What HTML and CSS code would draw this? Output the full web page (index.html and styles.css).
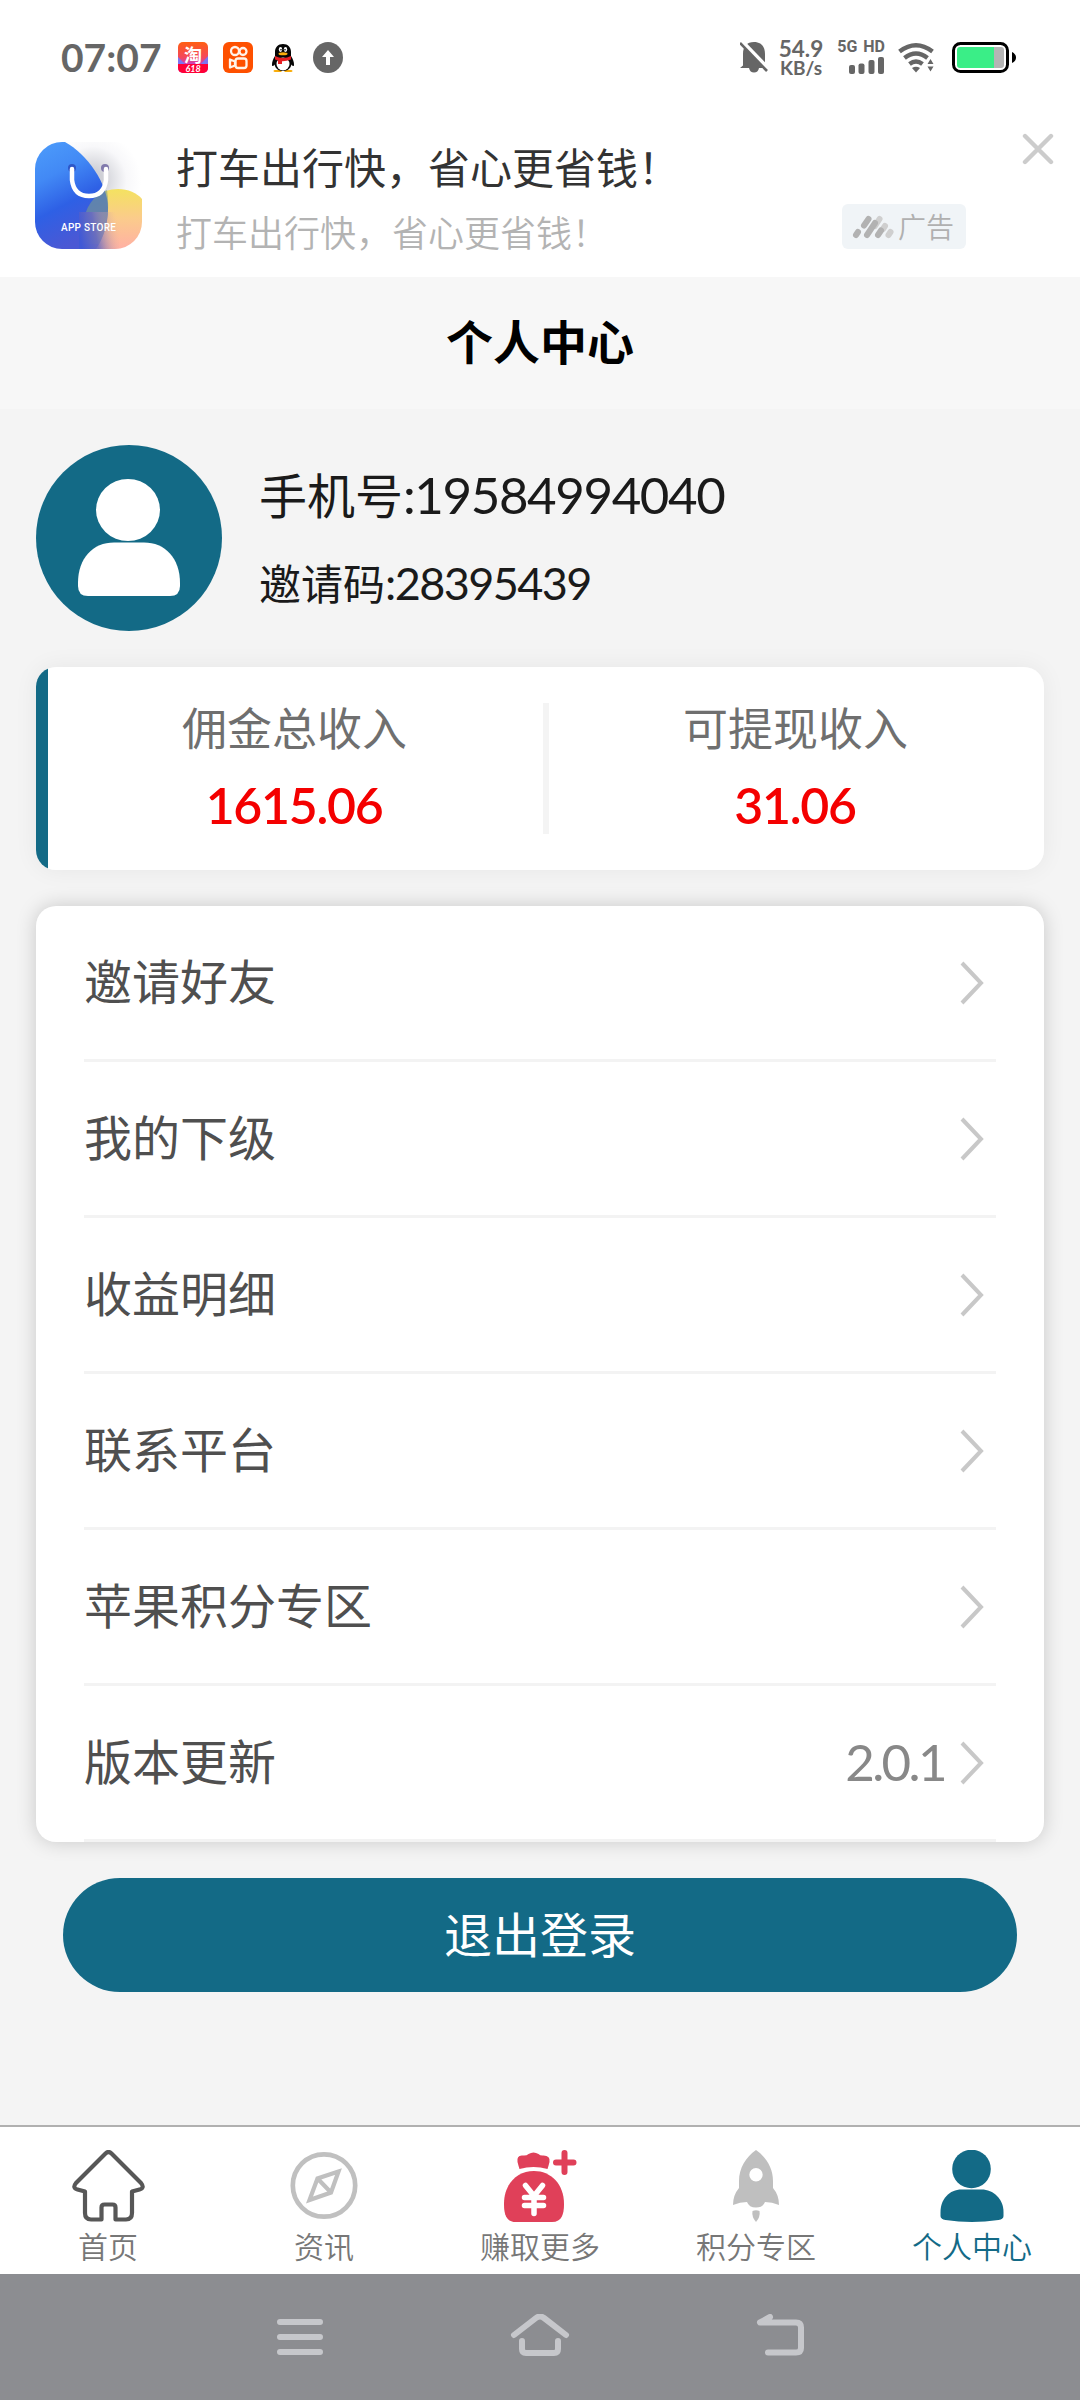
FILE: index.html
```html
<!DOCTYPE html>
<html lang="zh-CN">
<head>
<meta charset="utf-8">
<title>个人中心</title>
<link rel="stylesheet" href="styles.css">
</head>
<body>
<div class="screen">
  <header class="status">
    <span class="clock">07:07</span>
    <div class="apps">
      <svg width="30" height="31" viewBox="0 0 30 31">
        <defs><linearGradient id="tb" x1="0" y1="0" x2="0" y2="1"><stop offset="0" stop-color="#ff5f12"/><stop offset=".5" stop-color="#f4475c"/><stop offset=".75" stop-color="#c33fd0"/></linearGradient>
        <clipPath id="tbc"><rect width="30" height="31" rx="5"/></clipPath></defs>
        <g clip-path="url(#tbc)"><rect width="30" height="31" fill="url(#tb)"/><path d="M0 15l7 7H0zM30 14l-7 8h7z" fill="#7d74f0"/><rect y="22" width="30" height="9" fill="#ff0036"/>
        <text x="15" y="19.500" class="tao">淘</text><text x="15" y="30" class="sale">618</text></g>
      </svg>
      <svg width="30" height="31" viewBox="0 0 30 31">
        <rect width="30" height="31" rx="6" fill="#fe5000"/>
        <g fill="none" stroke="#fff3ea" stroke-width="2.300"><circle cx="12" cy="9" r="4"/><circle cx="20" cy="9.500" r="3.500"/><rect x="12.500" y="16.500" width="11" height="9.500" rx="2.500"/><path d="M12 19.500L7 17.500v8l5-2z" stroke-linejoin="round"/></g>
      </svg>
      <svg width="24" height="31" viewBox="0 0 24 31">
        <path d="M4 28c-2 0-2 2 0 2h6l2-2 2 2h6c2 0 2-2 0-2z" fill="#f9ad0b"/>
        <path d="M12 2c-5 0-8 3.500-8 8v4C2 17 1 20 1 22.500c0 2 1 2 2.500 0C4.500 27 8 29 12 29s7.500-2 8.500-6.500c1.500 2 2.500 2 2.500 0 0-2.500-1-5.500-3-8.500v-4c0-4.500-3-8-8-8z" fill="#060606"/>
        <ellipse cx="12" cy="22" rx="6.500" ry="6.500" fill="#fff"/><ellipse cx="9.500" cy="7.500" rx="1.700" ry="2.400" fill="#fff"/><ellipse cx="14.500" cy="7.500" rx="1.700" ry="2.400" fill="#fff"/><circle cx="10" cy="7.700" r=".8"/><circle cx="14" cy="7.700" r=".8"/>
        <ellipse cx="12" cy="11.700" rx="4.500" ry="1.500" fill="#f9ad0b"/><path d="M4 14q8 4 16 0v3.500q-5 2-9 1.800V22H7v-3.400l-3-1z" fill="#e61f23"/>
      </svg>
      <svg width="30" height="31" viewBox="0 0 30 31"><ellipse cx="15" cy="15.500" rx="15" ry="15.500" fill="#666"/><path d="M15 8l6 7h-4v8h-4v-8H9z" fill="#fff"/></svg>
    </div>
    <div class="signals">
      <svg width="28" height="32" viewBox="0 0 28 32"><path d="M3 24.500V13C3 5.500 7 1 14 1s11 4.500 11 12v11.500l2 2.500H0z" fill="#666"/><path d="M9 27h10q-1 4.500-5 4.500T9 27z" fill="#666"/><path d="M1 0l28 29" stroke="#fff" stroke-width="5"/><path d="M0 2l27 28" stroke="#666" stroke-width="2.600"/></svg>
      <div class="speed"><span>54.9</span><span>KB/s</span></div>
      <div class="cell"><span>5G HD</span><svg width="36" height="17" viewBox="0 0 36 17" fill="#666"><rect x="0" y="8" width="6" height="9" rx="2"/><rect x="9.500" y="6.500" width="6" height="10.500" rx="2"/><rect x="19.500" y="3" width="6" height="14" rx="2"/><rect x="29" y="0" width="6" height="17" rx="2"/></svg></div>
      <svg class="wifi" width="37" height="31" viewBox="0 0 37 31"><g fill="none" stroke="#666" stroke-width="4.400"><path d="M1.500 9.500Q18 -3 34.500 9.500"/><path d="M6.500 16Q18 7 29.500 16"/><path d="M11.500 22Q18 17 24.500 22"/></g><path d="M14 26q4-2.500 8 0l-4 4.500z" fill="#666"/><path d="M29.500 22l3-5 3 5zM29.500 24.500h6l-3 5z" fill="#666"/></svg>
      <svg class="battery" width="66" height="31" viewBox="0 0 66 31"><rect x="1.500" y="1.500" width="54" height="28" rx="7" fill="#fff" stroke="#000" stroke-width="3"/><path d="M8 5h34v21H8q-3 0-3-3V8q0-3 3-3z" fill="#3aee87"/><path d="M42 5h7q3 0 3 3v15q0 3-3 3h-7z" fill="#b5b5b5"/><path d="M60 10q4 2 4 5.500T60 21z"/></svg>
    </div>
  </header>

  <section class="ad">
    <svg class="ad-logo" width="107" height="107" viewBox="0 0 107 107">
      <defs>
        <linearGradient id="bg1" x1="0" y1="0" x2=".35" y2="1"><stop offset="0" stop-color="#4d9dfb"/><stop offset=".35" stop-color="#4289f5"/><stop offset=".65" stop-color="#2e60e5"/><stop offset="1" stop-color="#4b58d4"/></linearGradient>
        <linearGradient id="bg2" x1="0" y1="0" x2="0" y2="1"><stop offset="0" stop-color="#f4e260"/><stop offset=".5" stop-color="#fbcb8c"/><stop offset="1" stop-color="#ffb0a4"/></linearGradient>
        <linearGradient id="bg3" gradientUnits="userSpaceOnUse" x1="44" y1="92" x2="84" y2="84"><stop offset="0" stop-color="#4059d6"/><stop offset=".4" stop-color="#6a6cc0" stop-opacity=".9"/><stop offset="1" stop-color="#fbbf98" stop-opacity="0"/></linearGradient>
        <radialGradient id="bg4" gradientUnits="userSpaceOnUse" cx="58" cy="38" r="48"><stop offset=".2" stop-color="#cfd0d6"/><stop offset=".7" stop-color="#f8f8fa"/><stop offset="1" stop-color="#fff"/></radialGradient>
        <clipPath id="ac"><rect width="107" height="107" rx="27"/></clipPath>
      </defs>
      <g clip-path="url(#ac)"><rect width="107" height="107" fill="url(#bg4)"/>
      <path d="M83 47c10 0 19 4 24 10v50H48V78C50 58 66 47 83 47z" fill="url(#bg2)"/>
      <path d="M0 0h30C52 12 73 42 73 66c0 18-6 32-12 41H0z" fill="url(#bg1)"/>
      <path d="M48 82C50 66 58 53 72 48c3 20 0 40-8 54H48z" fill="#7c9c8c" opacity=".6"/>
      <path d="M44 70h40v37H44z" fill="url(#bg3)"/></g>
      <circle cx="37" cy="26" r="4" fill="#2d56c8"/><circle cx="70" cy="26" r="4" fill="#817aac"/>
      <path d="M37 27v11q2 16 17 16t17-16V27" fill="none" stroke="#fff" stroke-width="4.500" stroke-linecap="round"/>
      <text x="26" y="89" class="store" textLength="55">APP STORE</text>
    </svg>
    <div class="ad-copy"><p class="ad-title">打车出行快，省心更省钱！</p><p class="ad-sub">打车出行快，省心更省钱！</p></div>
    <div class="ad-tag">
      <svg width="42" height="24" viewBox="0 0 42 24" stroke-width="6" stroke-linecap="round"><g stroke="#cfcfcf"><path d="M23 11L27.500 4M31 14l2-3M36.500 20l2-3"/></g><g stroke="#b2b2b2"><path d="M4 20l2-3M12 10.500L16.500 4M15 20l8-12M26 20l3-4.500"/></g></svg>
      <span>广告</span>
    </div>
    <svg class="close" width="32" height="32" viewBox="0 0 32 32"><path d="M3 3l26 26M29 3L3 29" stroke="#ccc" stroke-width="4.400" stroke-linecap="round"/></svg>
  </section>

  <h1 class="title">个人中心</h1>

  <main class="content">
    <section class="profile">
      <svg width="186" height="186" viewBox="0 0 186 186"><circle cx="93" cy="93" r="93" fill="#136a86"/><ellipse cx="92" cy="65" rx="32" ry="31" fill="#fff"/><path d="M42 138v3q0 10 10 10h82q10 0 10-10v-3c0-25-15-40.500-36-40.500H78c-21 0-36 15.500-36 40.500z" fill="#fff"/></svg>
      <div class="ids"><p class="phone">手机号<span>:19584994040</span></p><p class="invite">邀请码<span>:28395439</span></p></div>
    </section>

    <section class="income">
      <div class="amount"><p>佣金总收入</p><strong>1615.06</strong></div>
      <i class="split"></i>
      <div class="amount"><p>可提现收入</p><strong>31.06</strong></div>
    </section>

    <ul class="menu">
      <li><span>邀请好友</span><svg class="chev" viewBox="0 0 24 44"><path d="M2 2l19 20L2 42"/></svg></li>
      <li><span>我的下级</span><svg class="chev" viewBox="0 0 24 44"><path d="M2 2l19 20L2 42"/></svg></li>
      <li><span>收益明细</span><svg class="chev" viewBox="0 0 24 44"><path d="M2 2l19 20L2 42"/></svg></li>
      <li><span>联系平台</span><svg class="chev" viewBox="0 0 24 44"><path d="M2 2l19 20L2 42"/></svg></li>
      <li><span>苹果积分专区</span><svg class="chev" viewBox="0 0 24 44"><path d="M2 2l19 20L2 42"/></svg></li>
      <li><span>版本更新</span><em>2.0.1</em><svg class="chev" viewBox="0 0 24 44"><path d="M2 2l19 20L2 42"/></svg></li>
    </ul>

    <button class="logout">退出登录</button>
  </main>

  <nav class="tabs">
    <a class="tab"><svg width="76" height="72" viewBox="0 0 76 72"><path d="M35.500 3.500Q38.500 .5 41.500 3.500L71 33q4 5-1.500 6.500L62 41.500V63q0 6.500-6 6.500H45.500V57.500q0-3-3-3h-8q-3 0-3 3v12H21q-6 0-6-6.500V41.500L7.500 39.500Q2 38 6 33z" fill="none" stroke="#575757" stroke-width="4.200" stroke-linejoin="round"/></svg><span>首页</span></a>
    <a class="tab"><svg width="72" height="72" viewBox="0 0 72 72" fill="none" stroke="#c0c0c0"><ellipse cx="36" cy="35.500" rx="31.200" ry="31.200" stroke-width="4.700"/><path d="M50.500 21.500L29.500 28.500 21.500 50 43 42.500zM29.500 28.500L43 42.500" stroke-width="4.200"/></svg><span>资讯</span></a>
    <a class="tab"><svg width="76" height="72" viewBox="0 0 76 72"><path d="M17.500 19q-1-3-2-7-1-7 5-6.500 4 .5 6-1.500 5-3 10 0 2 2 5 1.500 7 0 6 6.500-1 4-2 7-14-4-28 0z" fill="#e04059"/><path d="M14 72C4 72 2 64 2 54 2 34 15 21 32 21s30 13 30 33c0 10-2 18-12 18z" fill="#e04059"/><path d="M23.500 35.500L32 46l8.500-10.500M22.500 47.500h19M22.500 55.500h19M32 46v17.500" fill="none" stroke="#fff" stroke-width="5.500" stroke-linecap="round"/><path d="M62.500 3v19M54 12.500h17.500" stroke="#e04059" stroke-width="6" stroke-linecap="round"/></svg><span>赚取更多</span></a>
    <a class="tab"><svg width="48" height="72" viewBox="0 0 48 72" fill="#bfbfbf"><path fill-rule="evenodd" d="M24 0c10 7 17 18 17 31v7q6 7 6 17-7-3-14-3-2 5.500-9 5.500T15 52q-7 0-14 3 0-10 6-17v-7C7 18 14 7 24 0zM24 18a6.700 6.700 0 100 13.400A6.700 6.700 0 0024 18z"/><path d="M20.500 61q3.500-1.500 7 0 1 6-3.500 11-4.500-5-3.500-11z"/></svg><span>积分专区</span></a>
    <a class="tab active"><svg width="64" height="72" viewBox="0 0 64 72" fill="#136a86"><circle cx="31.500" cy="19" r="19.300"/><path d="M.5 62c0-13 9-22.500 21-22.500h20c12 0 22 9.500 22 22.500v4q0 3-5 4-27 4-53 0-5-1-5-4z"/></svg><span>个人中心</span></a>
  </nav>

  <footer class="sysnav">
    <svg width="48" height="46" viewBox="0 0 48 46"><path d="M4 8h40M4 23h40M4 38h40"/></svg>
    <svg width="60" height="46" viewBox="0 0 60 46"><path d="M4 21L26 4q4-3 8 0l22 17M12 27v8q0 4 4 4h28q4 0 4-4v-8"/></svg>
    <svg width="50" height="46" viewBox="0 0 50 46"><path d="M14 3L4 8.500h36q5 0 5 5V34q0 4.500-5 4.500H12"/></svg>
  </footer>
</div>
</body>
</html>
```
FILE: styles.css
```css
* { box-sizing: border-box; margin: 0; padding: 0; }
body { width: 1080px; font-family: Lato, "Noto Sans CJK SC", sans-serif; background: #f4f4f4; }
svg { display: block; flex: none; }
.screen { display: flex; flex-direction: column; width: 1080px; height: 2400px; overflow: hidden; }

.status { display: flex; align-items: center; height: 114px; background: #fff; padding: 0 62px 0 61px; color: #666; }
.clock { width: 117px; padding-bottom: 1px; font-size: 39px; line-height: 40px; font-weight: 700; white-space: nowrap; }
.apps { display: flex; align-items: center; gap: 15px; }
.apps svg:nth-child(3) { margin: 0 3px 0 3px; }
.tao { font: 700 18px "Noto Sans CJK SC", sans-serif; fill: #fff; text-anchor: middle; }
.sale { font: italic 700 9px Lato, sans-serif; fill: #fff; text-anchor: middle; }
.signals { display: flex; align-items: center; margin-left: auto; }
.speed { display: flex; flex-direction: column; align-items: center; width: 48px; margin: 1px 0 0 9px; font-size: 22.500px; line-height: 20px; font-weight: 700; }
.speed span:last-child { font-size: 19px; line-height: 18px; }
.cell { display: flex; flex-direction: column; align-items: flex-end; width: 48px; margin-left: 12px; gap: 3px; font: 700 16px/14px Roboto, sans-serif; word-spacing: 2px; white-space: nowrap; }
.wifi { margin-left: 13px; }
.battery { margin-left: 17px; }

.ad { display: flex; align-items: flex-start; height: 163px; background: #fff; padding: 28px 26px 0 35px; }
.ad-copy { width: 622px; margin: -2px 0 0 34px; white-space: nowrap; }
.ad-title { font-size: 42px; line-height: 56px; color: #333; }
.ad-sub { margin-top: 13px; font-size: 36px; line-height: 48px; font-weight: 350; color: #b3b3b3; }
.store { font: 500 10px Roboto, sans-serif; fill: #fff; }
.ad-tag { display: flex; align-items: center; width: 124px; height: 45px; margin: 62px 0 0 44px; padding-left: 10px; gap: 4px; border-radius: 6px; background: #f0f4f7; color: #b0b0b0; font-size: 28px; line-height: 40px; font-weight: 350; }
.close { margin: -9px 0 0 56px; }

.title { height: 132px; background: #f7f7f7; text-align: center; font-size: 47px; line-height: 130px; font-weight: 700; color: #000; }

.content { display: flex; flex-direction: column; flex: 1; padding: 36px 36px 0; }
.profile { display: flex; gap: 37px; height: 186px; color: #1a1a1a; }
.ids { padding-top: 14px; white-space: nowrap; }
.phone { font-size: 48px; line-height: 72px; }
.phone span { font-size: 51px; letter-spacing: -1.4px; }
.invite { margin-top: 20px; font-size: 42px; line-height: 62px; }
.invite span { font-size: 45px; letter-spacing: -1.6px; }

.income { display: flex; align-items: center; height: 203px; margin-top: 36px; padding-left: 12px; background: linear-gradient(90deg, #136a86 12px, #fff 12px); border-radius: 20px; box-shadow: 0 0 24px rgba(0, 0, 0, .06); }
.amount { flex: 1; text-align: center; color: #6f6f6f; font-size: 45px; line-height: 62px; padding: 0 2px 3px 0; }
.amount strong { display: block; margin-top: 14px; padding-right: 1px; font-size: 50px; line-height: 62px; letter-spacing: -1.3px; color: #f40000; font-weight: 600; }
.split { width: 6px; height: 131px; background: #f4f4f4; }

.menu { list-style: none; height: 936px; margin-top: 36px; padding: 0 48px; background: #fff; border-radius: 20px; box-shadow: 0 0 20px rgba(0, 0, 0, .18); }
.menu li { display: flex; align-items: center; height: 156px; border-bottom: 3px solid #f3f3f3; padding-right: 12px; font-size: 48px; line-height: 70px; color: #4f4f4f; }
.menu span { padding-bottom: 2px; }
.menu em { margin: 0 15px 2px auto; font-style: normal; font-size: 51px; letter-spacing: -2.6px; color: #888; }
.chev { width: 24px; height: 44px; margin-left: auto; fill: none; stroke: #c8c8c8; stroke-width: 4; }
.menu em + .chev { margin-left: 0; }

.logout { width: 954px; height: 114px; margin: 36px auto 0; border: 0; border-radius: 57px; background: #136a86; color: #fff; font: 400 48px/112px Lato, "Noto Sans CJK SC", sans-serif; }

.tabs { display: flex; height: 149px; border-top: 2px solid #b0b0b0; background: #fff; }
.tab { display: flex; flex-direction: column; align-items: center; width: 216px; padding-top: 23px; color: #777; font-size: 30px; line-height: 44px; font-weight: 350; }
.tab span { margin-top: 2px; }
.tab.active { color: #136a86; }

.sysnav { display: flex; justify-content: center; align-items: center; height: 126px; padding-left: 2px; gap: 186px; background: #8c8d91; }
.sysnav svg { fill: none; stroke: #c6c7cb; stroke-width: 6; stroke-linecap: round; stroke-linejoin: round; }
```
